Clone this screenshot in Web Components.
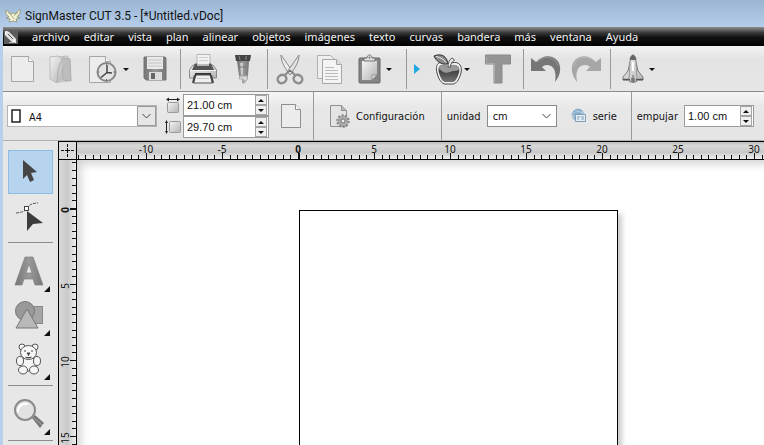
<!DOCTYPE html>
<html lang="es">
<head>
<meta charset="utf-8">
<title>SignMaster CUT 3.5</title>
<style>
    html, body {
        height: 100%;
        margin: 0;
    }
    body {
        overflow: hidden;
        font-family: "Noto Sans", "Open Sans", sans-serif;
        font-size: 11px;
        color: #111;
    }
</style>
</head>
<body>
<sign-app></sign-app>

<script>
const icons = {
    eagle: [16, 16, `
        <path d="M1 2l5 4 2-1 2 1 5-5v4l-3 4 3 1-4 1 1 3-4-1-4 1 1-3-4-1 3-1-3-3z" fill="#f1eed2" stroke="#8d8c68" stroke-width=".7"/>
        <path d="M3 4l4 4m6-4L9 8m-2 0l2 3" stroke="#a39f6f" stroke-width=".8" fill="none"/>`],
    pencil: [14, 14, `
        <rect width="14" height="14" fill="#5c5c5c"/>
        <path d="M1.500 1.500l3 .5 7 7-3 3-7-7z" fill="#ddd" stroke="#fff"/>
        <path d="M4 4l5 5" stroke="#555"/><path d="M5 12.500h7" stroke="#bbb"/><path d="M11 8.500l1.500 4-4-1z" fill="#fff"/>`],
    page: [24, 28, `
        <path d="M.5 1.500h17l5 5v20h-22z" fill="#ececec" stroke="#a6a6a6"/>
        <path d="M17.500 1.500v5h5" fill="#f8f8f8" stroke="#a6a6a6"/>`],
    folder: [24, 30, `
        <path d="M9 3l10-1v25l-10 1z" fill="#d2d2d2" stroke="#bbb"/>
        <path d="M13 4l8 1 1 22-8-1z" fill="#bdbdbd" stroke="#adadad"/>
        <path d="M1 3l8-1 5 4-2 20-4 3-7-4z" fill="url(#light)" stroke="#bcbcbc"/>
        <path d="M8 28c1-7 0-14 5-22" stroke="#aaa" fill="none"/>`],
    recent: [28, 29, `
        <path d="M.5 1.500h16l5 5v21h-21z" fill="#ececec" stroke="#a6a6a6"/>
        <path d="M16.500 1.500v5h5" fill="#f8f8f8" stroke="#a6a6a6"/>
        <circle cx="17.500" cy="17" r="9" fill="#e4e4e4" stroke="#888" stroke-width="2"/>
        <path d="M17.500 8v2m0 14v2M8.500 17h2m14 0h2" stroke="#777"/>
        <path d="M18 10v7.500l5 .5M18 17.500l-6 5" stroke="#444" stroke-width="1.500" fill="none"/>`],
    save: [24, 26, `
        <path d="M1 1h21l1 1v22H3l-2-2z" fill="url(#steel)" stroke="#777"/>
        <rect x="4" y="1" width="16" height="12" fill="#e9e9e9"/>
        <path d="M5 4h14M5 7h14M5 10h14" stroke="#c6c6c6"/>
        <rect x="6" y="16" width="13" height="8" fill="#ddd"/><rect x="8" y="17" width="4" height="6" fill="#666"/>`],
    printer: [28, 30, `
        <path d="M8 .5h13v12H8z" fill="#f1f1f1" stroke="#b5b5b5"/>
        <path d="M10 3.500h9m-9 3h9" stroke="#d0d0d0"/>
        <path d="M4 11h20l3.500 5v8H.5v-8z" fill="url(#light)" stroke="#8a8a8a"/>
        <path d="M6 9.500h2V12h12V9.500h2l3 6.500H3z" fill="#555"/>
        <path d="M1 16.500h26" stroke="#f3f3f3"/>
        <path d="M6 19h16v3H6z" fill="#333"/>
        <path d="M7 21h14l2.500 8h-19z" fill="#eee" stroke="#555"/>
        <path d="M6 21L4 29m18-8l2 8" stroke="#444" stroke-width="2"/>
        <path d="M8 24.500h12" stroke="#ccc"/>`],
    cutter: [18, 31, `
        <path d="M1 1h16l-1 6H2z" fill="#444"/>
        <path d="M5 2l1 4m6-4v4" stroke="#888"/>
        <path d="M3 7h12l-1 15H5z" fill="url(#steel)"/>
        <path d="M6 9h3v12H7z" fill="#c9c9c9"/><path d="M4 13h10" stroke="#777"/>
        <path d="M5.500 22h8v3l-3 4h-2v-4h-3z" fill="#d4d4d4" stroke="#aaa"/>
        <path d="M9 25v4l2-3" stroke="#999"/>`],
    scissors: [28, 31, `
        <path d="M5 1l12 17-3 3C9 14 5 8 5 1z" fill="#eee" stroke="#8a8a8a"/>
        <path d="M23 1L11 18l3 3c5-7 9-13 9-20z" fill="#e2e2e2" stroke="#8a8a8a"/>
        <ellipse cx="6" cy="25" rx="4.500" ry="4" fill="none" stroke="#8e8e8e" stroke-width="2.500" transform="rotate(-35 6 25)"/>
        <ellipse cx="22" cy="25" rx="4.500" ry="4" fill="none" stroke="#8e8e8e" stroke-width="2.500" transform="rotate(35 22 25)"/>
        <path d="M9 21l4-4m6 4l-4-4" stroke="#8a8a8a" stroke-width="2"/><circle cx="14" cy="17" r="1" fill="#555"/>`],
    copy: [26, 31, `
        <path d="M.5 1.500h13l4 4v19H.5z" fill="#efefef" stroke="#b0b0b0"/>
        <path d="M5.500 5.500h14l5 5v19h-19z" fill="#f4f4f4" stroke="#a6a6a6"/>
        <path d="M19.500 5.500v5h5" fill="#ddd" stroke="#a6a6a6"/>
        <path d="M8 13.500h9m-9 3h13m-13 3h13m-13 3h13m-13 3h13" stroke="#bbb"/>`],
    paste: [24, 30, `
        <rect x="1" y="4" width="21" height="25" rx="1" fill="#858585" stroke="#686868"/>
        <path d="M4 7h15v14l-5 5H4z" fill="url(#light)"/><path d="M19 21h-5v5z" fill="#ddd" stroke="#777" stroke-width=".7"/>
        <path d="M6 7V4h3c0-4 5-4 5 0h3v3z" fill="#ddd" stroke="#777"/><circle cx="11.500" cy="3.500" r="1" fill="#777"/>`],
    play: [6, 10, `<path d="M0 0l6 5-6 5z" fill="#22a7e0"/>`],
    apple: [30, 32, `
        <path d="M16 11C5 6 2 12 4 20c2 8 6 12 10 11h4c5 1 8-4 10-11 2-9-4-13-12-9z" fill="#f4f4f4" stroke="#444"/>
        <path d="M16 13C7 9 4 13 6 20c2 7 5 10 8 9h4c4 1 6-3 8-9 2-7-3-10-10-7z" fill="url(#dark)"/>
        <path d="M6 15c2-5 7-2 10-1 4-2 8-3 10 1 0 4-5 2-9 4-5 2-8 0-11-4z" fill="#999"/>
        <path d="M15 11C8 12 3 8 1 3c7-3 13 0 14 8z" fill="#8a8a8a" stroke="#333"/>
        <path d="M3 3.500c5 1 8 3 10 6" stroke="#eee" fill="none"/>
        <path d="M15 14c0-4 1-7 4-9l2.500 2c-3 2-4 4-4 7z" fill="#eee" stroke="#555"/>`],
    type: [28, 30, `
        <path d="M1.500 1h25v9H18v19h-8V10H1.500z" fill="#949494" stroke="#8a8a8a"/>
        <path d="M10.500 28V9.500H2.500V3" stroke="#aaa" fill="none"/>`],
    undo: [32, 30, `
        <path d="M1 4l5 4C15-2 29 2 30 13c1 6-2 11-5 15 1-6 1-13-4-16-4-2-7-1-9 1l4 4H1z" fill="#767676"/>
        <path d="M7 8C15 0 26 3 28 12" stroke="#999" fill="none"/>`],
    redo: [32, 30, `
        <path d="M31 4l-5 4C17-2 3 2 2 13c-1 6 2 11 5 15-1-6-1-13 4-16 4-2 7-1 9 1l-4 4h15z" fill="#a6a6a6"/>
        <path d="M25 8C17 0 6 3 4 12" stroke="#bbb" fill="none"/>`],
    shuttle: [22, 30, `
        <path d="M11 1c-2 0-3 3-3 7l-2 9-5 6v3h6l1 2h6l1-2h6v-3l-5-6-2-9c0-4-1-7-3-7z" fill="url(#light)" stroke="#777"/>
        <path d="M11 1c-1 0-3 2-3 5h6c0-3-2-5-3-5z" fill="#666"/>
        <path d="M8 10l-1 14m7-14l1 14" stroke="#999"/><path d="M11 8v9" stroke="#fff" stroke-width="2"/>
        <path d="M9 24h4v4H9z" fill="#888"/>
        <path d="M1 25.500h7m6 0h7" stroke="#555" stroke-width="1.500"/><path d="M11 21v8" stroke="#666"/>`],
    blank: [20, 26, `
        <path d="M.5 1.500h14l5 5v18H.5z" fill="#ececec" stroke="#8f8f8f"/>
        <path d="M14.500 1.500v5h5" fill="#f8f8f8" stroke="#8f8f8f"/>`],
    config: [20, 26, `
        <path d="M.5 2.500h11l5 5v16H.5z" fill="#e4e4e4" stroke="#8f8f8f"/>
        <path d="M11.500 2.500v5h5" fill="#bbb" stroke="#8f8f8f"/>
        <circle cx="13" cy="18" r="5.500" fill="#bbb" stroke="#858585" stroke-width="2.500" stroke-dasharray="2 1.400"/>
        <circle cx="13" cy="18" r="4.500" fill="#aaa"/><circle cx="13" cy="18" r="2" fill="#eee" stroke="#777"/>`],
    serial: [16, 16, `
        <circle cx="7" cy="7" r="6.500" fill="#a9c3d8"/><path d="M3 4c2-3 5-3 8-1M2 7c3-3 5-2 8-1M3 10h3" stroke="#6b9cc2" fill="none"/>
        <path d="M4.500 6.500h10v7h-10z" fill="#e6edf3" stroke="#7d9db8"/><path d="M6 9h3m1 0h3m-7 2h2m2 0h3" stroke="#7ba0c0"/>`],
    sheet: [10, 14, `<path d="M1 1h8v12H1z" fill="#fff" stroke="#222" stroke-width="1.500"/>`],
    width: [14, 16, `
        <path d="M1 2.500h12" stroke="#222"/><path d="M3 .5v4L0 2.500zm8 0v4l3-2z" fill="#222"/>
        <rect x="1.500" y="5.500" width="11" height="10" rx="1" fill="url(#light)" stroke="#999"/>`],
    height: [16, 14, `
        <path d="M1.500 2v10" stroke="#222"/><path d="M0 3l1.500-3L3 3zm0 8l1.500 3L3 11z" fill="#222"/>
        <rect x="4.500" y="1.500" width="11" height="11" rx="1" fill="url(#light)" stroke="#999"/>`],
    pointer: [32, 32, `<path d="M10 4v19l4-4 3 7 4-2-3-7 6-1z" fill="#454545"/>`],
    node: [32, 32, `
        <path d="M3 13c9-1 10-3 12-6s6-4 10-4" fill="none" stroke="#555" stroke-dasharray="3 1"/>
        <rect x="11.500" y="6.500" width="4" height="4" fill="#fff" stroke="#444"/><path d="M14 11v20l6-7 10-1z" fill="#3c3c3c"/>`],
    letter: [32, 32, `
        <path d="M12 2h8l10 28h-8l-2-6h-9l-2 6H2zM13 18h6l-3-9z" fill="url(#steel)" fill-rule="evenodd" stroke="#838383" stroke-width=".7"/>`],
    shapes: [32, 32, `
        <rect x="16.500" y="7.500" width="13" height="17" fill="#a5a5a5" stroke="#888"/>
        <circle cx="12" cy="12" r="9.500" fill="#999" stroke="#777"/>
        <path d="M14 10l11 19H3z" fill="#b8b8b8" stroke="#777"/>`],
    bear: [32, 34, `
        <g fill="#f6f6f6" stroke="#555"><circle cx="9" cy="5" r="3"/><circle cx="22" cy="5" r="3"/>
        <path d="M10 16c-3 5-2 10 0 13h11c3-4 3-9 0-13z"/><ellipse cx="15.500" cy="10.500" rx="8" ry="7"/>
        <ellipse cx="7" cy="19" rx="3.500" ry="4.500"/><ellipse cx="24" cy="19" rx="3.500" ry="4.500"/>
        <ellipse cx="10" cy="28" rx="4.500" ry="4"/><ellipse cx="21" cy="28" rx="4.500" ry="4"/></g>
        <path d="M14 11h3l-1.500 2zm1.500 2v1m-3 1q3 2 6 0M12 8v2m7-2v2" fill="#444" stroke="#444"/>`],
    zoom: [32, 32, `
        <path d="M19 20l3-3 9 8-4 5z" fill="#777"/><path d="M21 20l8 7" stroke="#aaa"/>
        <circle cx="12" cy="12" r="10" fill="#e2e2e2" stroke="#8b8b8b" stroke-width="2"/>
        <path d="M5 14c0-6 4-9 10-8" fill="none" stroke="#fff" stroke-width="2"/>`]
};

const defs = `
    <defs>
        <linearGradient id="light" x2="1" y2="1"><stop stop-color="#f4f4f4"/><stop offset="1" stop-color="#b4b4b4"/></linearGradient>
        <linearGradient id="steel"><stop stop-color="#757575"/><stop offset=".5" stop-color="#999"/><stop offset="1" stop-color="#777"/></linearGradient>
        <linearGradient id="dark" x2="0" y2="1"><stop stop-color="#999"/><stop offset=".4" stop-color="#444"/><stop offset="1" stop-color="#777"/></linearGradient>
    </defs>`;

function addShadow(el, html) {
    const template = document.createElement("template");
    template.innerHTML = html;
    const shadow = el.attachShadow({mode: "open"});
    shadow.appendChild(template.content.cloneNode(true));
    return shadow;
}

class UiIcon extends HTMLElement {
    connectedCallback() {
        if (this.shadowRoot) return;
        const [w, h, body] = icons[this.getAttribute("name")];
        addShadow(this, `
            <style>
                :host { display: inline-flex; flex: none; }
                svg { display: block; }
            </style>
            <svg width="${w}" height="${h}" viewBox="0 0 ${w} ${h}" fill="none" aria-hidden="true">${defs}${body}</svg>
        `);
    }
}
customElements.define("ui-icon", UiIcon);

class TitleBar extends HTMLElement {
    constructor() {
        super();
        addShadow(this, `
            <style>
                :host {
                    display: flex;
                    align-items: center;
                    gap: 4px;
                    height: 23px;
                    padding: 4px 5px 0;
                    background: linear-gradient(#9ab5d1, #b4cdeb);
                    font-family: Roboto, "Open Sans", sans-serif;
                    font-size: 12px;
                    color: #111;
                }
            </style>
            <ui-icon name="eagle"></ui-icon>
            <slot></slot>
        `);
    }
}
customElements.define("title-bar", TitleBar);

class MenuBar extends HTMLElement {
    constructor() {
        super();
        addShadow(this, `
            <style>
                :host {
                    display: flex;
                    align-items: center;
                    gap: 14px;
                    height: 19px;
                    padding-left: 1px;
                    background: linear-gradient(#8f8f8f, #3a3a3a 30%, #111 55%, #000);
                }
                ::slotted(button) {
                    padding: 0;
                    border: 0;
                    background: none;
                    color: #f2f2f2;
                    font: inherit;
                    line-height: 16px;
                }
            </style>
            <ui-icon name="pencil"></ui-icon>
            <slot></slot>
        `);
    }
}
customElements.define("menu-bar", MenuBar);

class ToolButton extends HTMLElement {
    connectedCallback() {
        if (this.shadowRoot) return;
        addShadow(this, `
            <style>
                :host { display: flex; }
                button {
                    display: flex;
                    align-items: center;
                    padding: 0;
                    border: 0;
                    background: none;
                }
                .icon {
                    display: flex;
                    justify-content: center;
                    width: 32px;
                }
                :host([wide]) .icon { width: 40px; }
                :host([slim]) .icon { width: 6px; }
                .caret {
                    border: 3px solid transparent;
                    border-top-color: #111;
                    border-bottom: 0;
                }
            </style>
            <button aria-label="${this.getAttribute("label")}">
                <span class="icon"><ui-icon name="${this.getAttribute("icon")}"></ui-icon></span>
                ${this.hasAttribute("menu") ? `<span class="caret"></span>` : ""}
            </button>
        `);
    }
}
customElements.define("tool-button", ToolButton);

class BarGroup extends HTMLElement {
    constructor() {
        super();
        addShadow(this, `
            <style>
                :host {
                    display: flex;
                    align-items: center;
                    gap: 8px;
                    padding: 0 8px 0 6px;
                    border-right: 1px solid #999;
                }
                :host([last]) { border-right: 0; }
            </style>
            <slot></slot>
        `);
    }
}
customElements.define("bar-group", BarGroup);

class MainToolbar extends HTMLElement {
    constructor() {
        super();
        addShadow(this, `
            <style>
                :host {
                    display: flex;
                    height: 40px;
                    padding: 3px 0 2px;
                    border-bottom: 1px solid #8c8c8c;
                    background: linear-gradient(#f2f2f2, #e3e3e3 30%, #e6e6e6);
                }
                .file { padding: 0 5px 0 4px; gap: 6px; }
                .edit { padding-right: 14px; }
                .insert { padding: 0 9px 0 7px; gap: 12px; }
            </style>
            <bar-group class="file">
                <tool-button icon="page" label="Nuevo"></tool-button>
                <tool-button icon="folder" label="Abrir"></tool-button>
                <tool-button icon="recent" label="Recientes" wide menu></tool-button>
                <tool-button icon="save" label="Guardar" wide></tool-button>
            </bar-group>
            <bar-group>
                <tool-button icon="printer" label="Imprimir"></tool-button>
                <tool-button icon="cutter" label="Cortar vinilo"></tool-button>
            </bar-group>
            <bar-group class="edit">
                <tool-button icon="scissors" label="Cortar"></tool-button>
                <tool-button icon="copy" label="Copiar"></tool-button>
                <tool-button icon="paste" label="Pegar" menu></tool-button>
            </bar-group>
            <bar-group class="insert">
                <tool-button icon="play" label="Mostrar" slim></tool-button>
                <tool-button icon="apple" label="Imagen" menu></tool-button>
                <tool-button icon="type" label="Texto"></tool-button>
            </bar-group>
            <bar-group>
                <tool-button icon="undo" label="Deshacer"></tool-button>
                <tool-button icon="redo" label="Rehacer"></tool-button>
            </bar-group>
            <bar-group last>
                <tool-button icon="shuttle" label="Lanzar" menu></tool-button>
            </bar-group>
        `);
    }
}
customElements.define("main-toolbar", MainToolbar);

class SpinBox extends HTMLElement {
    connectedCallback() {
        if (this.shadowRoot) return;
        addShadow(this, `
            <style>
                :host {
                    display: flex;
                    align-items: center;
                    box-sizing: border-box;
                    width: var(--spin-width, 70px);
                    height: 22px;
                    padding: 0 1px 0 3px;
                    border: 1px solid #9a9a9a;
                    background: #fff;
                }
                input {
                    flex: 1;
                    min-width: 0;
                    padding: 0;
                    border: 0;
                    outline: 0;
                    background: none;
                    font: 11px "Liberation Sans", Arial, sans-serif;
                    color: #111;
                }
                .steps { display: grid; }
                button {
                    display: grid;
                    place-items: center;
                    width: 12px;
                    height: 10px;
                    padding: 0;
                    border: 1px solid #a5a5a5;
                    background: #f0f0f0;
                }
                i { border: 3px solid transparent; }
                .up { border-bottom-color: #111; border-top: 0; }
                .down { border-top-color: #111; border-bottom: 0; }
            </style>
            <input type="text" value="${this.getAttribute("value")}" aria-label="${this.getAttribute("label")}">
            <span class="steps">
                <button aria-label="Aumentar"><i class="up"></i></button>
                <button aria-label="Reducir"><i class="down"></i></button>
            </span>
        `);
    }
}
customElements.define("spin-box", SpinBox);

class DropDown extends HTMLElement {
    connectedCallback() {
        if (this.shadowRoot) return;
        const icon = this.getAttribute("icon");
        addShadow(this, `
            <style>
                :host {
                    display: grid;
                    grid-template-columns: auto 1fr 19px;
                    align-items: stretch;
                    box-sizing: border-box;
                    width: var(--drop-width, 70px);
                    height: 22px;
                    border: 1px solid #8a8a8a;
                    background: #fff;
                }
                select {
                    grid-area: 1 / 1 / 2 / 4;
                    appearance: none;
                    width: 100%;
                    padding: 0 20px 0 5px;
                    border: 0;
                    background: none;
                    font: inherit;
                    color: #111;
                }
                :host([icon]) { border-color: #b4b4b4; }
                :host([icon]) select { padding: 2px 20px 0 21px; }
                ui-icon {
                    grid-area: 1 / 1;
                    align-self: center;
                    padding-left: 3px;
                    pointer-events: none;
                }
                .arrow {
                    grid-area: 1 / 3;
                    display: grid;
                    place-items: center;
                    pointer-events: none;
                }
                :host([icon]) .arrow {
                    border: 1px solid #999;
                    background: #e6e6e6;
                }
            </style>
            <select aria-label="${this.getAttribute("label")}"><option>${this.getAttribute("value")}</option></select>
            ${icon ? `<ui-icon name="${icon}"></ui-icon>` : ""}
            <span class="arrow">
                <svg width="9" height="6" viewBox="0 0 9 6" fill="none" stroke="#444"><path d="M.5 1l4 4 4-4"/></svg>
            </span>
        `);
    }
}
customElements.define("drop-down", DropDown);

class PropertyBar extends HTMLElement {
    constructor() {
        super();
        addShadow(this, `
            <style>
                :host {
                    display: flex;
                    height: 48px;
                    border-bottom: 1px solid #b0b0b0;
                    background: linear-gradient(#f6f6f6, #e8e8e8 30%, #e4e4e4);
                    font-family: "DejaVu Sans Condensed", "Noto Sans", sans-serif;
                }
                .paper { padding: 0 12px 0 4px; }
                .paper drop-down { --drop-width: 150px; }
                .size {
                    display: grid;
                    grid-template-columns: 16px auto;
                    align-items: center;
                    justify-items: center;
                    column-gap: 2px;
                }
                .size spin-box { --spin-width: 86px; }
                .config { padding: 0 16px; }
                .unit { padding: 0 14px 0 5px; gap: 6px; }
                .step { padding-left: 5px; gap: 6px; }
                button {
                    display: flex;
                    align-items: center;
                    gap: 6px;
                    padding: 0;
                    border: 0;
                    background: none;
                    font: inherit;
                    color: inherit;
                }
                .blank { margin-left: 4px; }
                .serial { margin-left: 8px; }
            </style>
            <bar-group class="paper">
                <drop-down icon="sheet" label="Papel" value="A4"></drop-down>
                <div class="size">
                    <ui-icon name="width"></ui-icon><spin-box label="Ancho" value="21.00 cm"></spin-box>
                    <ui-icon name="height"></ui-icon><spin-box label="Alto" value="29.70 cm"></spin-box>
                </div>
                <button class="blank" aria-label="Orientación"><ui-icon name="blank"></ui-icon></button>
            </bar-group>
            <bar-group class="config">
                <button><ui-icon name="config"></ui-icon>Configuración</button>
            </bar-group>
            <bar-group class="unit">
                <span>unidad</span>
                <drop-down label="unidad" value="cm"></drop-down>
                <button class="serial"><ui-icon name="serial"></ui-icon>serie</button>
            </bar-group>
            <bar-group class="step" last>
                <span>empujar</span>
                <spin-box label="empujar" value="1.00 cm"></spin-box>
            </bar-group>
        `);
    }
}
customElements.define("property-bar", PropertyBar);

class SideTool extends HTMLElement {
    connectedCallback() {
        if (this.shadowRoot) return;
        addShadow(this, `
            <style>
                :host { display: block; }
                button {
                    display: grid;
                    place-items: center;
                    position: relative;
                    box-sizing: border-box;
                    width: 100%;
                    height: 44px;
                    padding: 0 3px 0 0;
                    border: 1px solid transparent;
                    background: none;
                }
                :host([active]) button {
                    border-color: #8fbde2;
                    background: #b6d4ee;
                }
                .corner {
                    position: absolute;
                    right: 2px;
                    bottom: 0;
                    border: 3px solid #111;
                    border-top-color: transparent;
                    border-left-color: transparent;
                }
            </style>
            <button aria-label="${this.getAttribute("label")}">
                <ui-icon name="${this.getAttribute("icon")}"></ui-icon>
                ${this.hasAttribute("menu") ? `<span class="corner"></span>` : ""}
            </button>
        `);
    }
}
customElements.define("side-tool", SideTool);

class ToolPalette extends HTMLElement {
    constructor() {
        super();
        addShadow(this, `
            <style>
                :host {
                    display: block;
                    padding: 9px 5px 0;
                    background: #e7e7e7;
                }
                hr {
                    height: 1px;
                    margin: 4px 0 6px;
                    border: 0;
                    background: #8c8c8c;
                }
            </style>
            <side-tool icon="pointer" label="Seleccionar" active></side-tool>
            <side-tool icon="node" label="Nodos"></side-tool>
            <hr>
            <side-tool icon="letter" label="Texto" menu></side-tool>
            <side-tool icon="shapes" label="Formas" menu></side-tool>
            <side-tool icon="bear" label="Dibujos" menu></side-tool>
            <hr>
            <side-tool icon="zoom" label="Zoom" menu></side-tool>
            <hr>
        `);
    }
}
customElements.define("tool-palette", ToolPalette);

// pixels for each centimetre of the document
const SCALE = 15.2;

class RulerStrip extends HTMLElement {
    constructor() {
        super();
        const shadow = addShadow(this, `
            <style>
                :host {
                    display: block;
                    overflow: hidden;
                    min-width: 0;
                    min-height: 0;
                    border: solid #000;
                    border-width: 1px 0;
                    background: linear-gradient(#bbb, #d8d8d8 20%, #c9c9c9 60%, #eee);
                }
                :host([vertical]) {
                    border-width: 0 1px;
                    background: linear-gradient(90deg, #d9d9d9, #c9c9c9 50%, #eee);
                }
                svg { display: block; width: 100%; height: 100%; }
                text { font-size: 10px; text-anchor: middle; }
            </style>
            <svg fill="#111"></svg>
        `);
        this.svg = shadow.querySelector("svg");
    }
    connectedCallback() {
        this.draw();
        new ResizeObserver(() => this.draw()).observe(this);
    }
    draw() {
        const vertical = this.hasAttribute("vertical");
        const origin = Number(this.getAttribute("origin"));
        const end = vertical ? this.clientHeight : this.clientWidth;
        const step = SCALE / 2;
        let marks = "";
        for (let i = -Math.floor(origin / step); origin + i * step < end; i++) {
            const at = Math.round(origin + i * step);
            const major = i % 10 === 0;
            const len = major ? 6 : 4;
            const thick = i === 0 ? 2 : 1;
            marks += vertical
                ? `<rect x="${17 - len}" y="${at}" width="${len}" height="${thick}"/>`
                : `<rect x="${at}" y="${17 - len}" width="${thick}" height="${len}"/>`;
            // a number needs room on both sides of its mark
            if (major && at > 8 && at < end - 7) {
                const weight = i === 0 ? ` font-weight="bold"` : "";
                marks += vertical
                    ? `<text transform="translate(10 ${at + 2}) rotate(-90)"${weight}>${i / 2}</text>`
                    : `<text x="${at}" y="11"${weight}>${i / 2}</text>`;
            }
        }
        this.svg.innerHTML = marks;
    }
}
customElements.define("ruler-strip", RulerStrip);

class DrawArea extends HTMLElement {
    constructor() {
        super();
        addShadow(this, `
            <style>
                :host {
                    display: grid;
                    grid-template: 19px 1fr / 19px 1fr;
                    min-width: 0;
                    min-height: 0;
                }
                .corner {
                    display: grid;
                    place-items: center;
                    border: 1px solid #000;
                    background: #dcdcdc;
                }
                .canvas {
                    position: relative;
                    overflow: hidden;
                    background: #fff;
                    box-shadow: inset 10px 10px 10px -6px #d4d4d4;
                }
                .page {
                    position: absolute;
                    left: 222px;
                    top: 50px;
                    width: 317px;
                    height: 449px;
                    border: 1px solid #000;
                    background: #fff;
                    box-shadow: 4px 4px 5px #ccc;
                }
            </style>
            <div class="corner">
                <svg width="15" height="15" viewBox="0 0 15 15" stroke="#111" fill="none">
                    <path d="M7.500 1v3m0 1v5m0 1v3M1 7.500h3m1 0h5m1 0h3"/>
                </svg>
            </div>
            <ruler-strip origin="221"></ruler-strip>
            <ruler-strip origin="48" vertical></ruler-strip>
            <div class="canvas"><div class="page"></div></div>
        `);
    }
}
customElements.define("draw-area", DrawArea);

class SignApp extends HTMLElement {
    constructor() {
        super();
        addShadow(this, `
            <style>
                :host {
                    display: flex;
                    flex-direction: column;
                    height: 100vh;
                    overflow: hidden;
                    background: #b7cfec;
                }
                .window {
                    display: flex;
                    flex: 1;
                    flex-direction: column;
                    min-height: 0;
                    margin-left: 3px;
                }
                .work {
                    display: grid;
                    grid-template-columns: 55px 1fr;
                    grid-template-rows: minmax(0, 1fr);
                    flex: 1;
                    min-height: 0;
                }
            </style>
            <title-bar>SignMaster CUT 3.5 - [*Untitled.vDoc]</title-bar>
            <div class="window">
                <menu-bar>
                    <button>archivo</button>
                    <button>editar</button>
                    <button>vista</button>
                    <button>plan</button>
                    <button>alinear</button>
                    <button>objetos</button>
                    <button>imágenes</button>
                    <button>texto</button>
                    <button>curvas</button>
                    <button>bandera</button>
                    <button>más</button>
                    <button>ventana</button>
                    <button>Ayuda</button>
                </menu-bar>
                <main-toolbar></main-toolbar>
                <property-bar></property-bar>
                <div class="work">
                    <tool-palette></tool-palette>
                    <draw-area></draw-area>
                </div>
            </div>
        `);
    }
}
customElements.define("sign-app", SignApp);
</script>
</body>
</html>
